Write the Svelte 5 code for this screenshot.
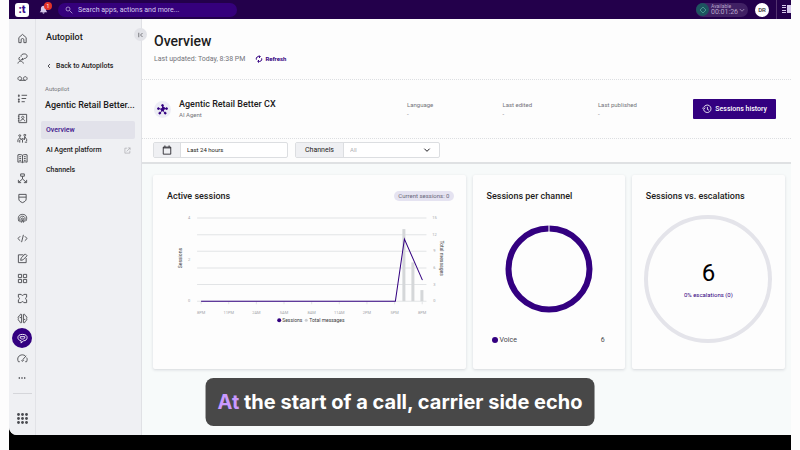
<script lang="ts">
    type NavItem = { name: string; path: string };

    // Rail icons, drawn as strokes on a 24 unit grid
    const rail: NavItem[] = [
        { name: "Home", path: "M4 10l8-7 8 7v11h-5v-6a3 3 0 0 0-6 0v6H4z" },
        { name: "Conversations", path: "M7 9a3.500 3.500 0 1 0 4 4M2 23c1-4 3-5 6-5s5 2 6 5M9 8c-1-5 4-6 7-6 4 0 6 2 6 5s-3 5-6 5l-4 3v-4" },
        { name: "Voicemail", path: "M6 8a4 4 0 1 0 .1 0M18 8a4 4 0 1 0 .1 0M6 16h12" },
        { name: "Tasks", path: "M4 3v6M2 6h4M4 12v9M2 14h4M2 19h4M10 5h12M10 12h10M10 19h7" },
        { name: "Contacts", path: "M4 3h17v18H4zM2 7h3M2 12h3M2 17h3M12.500 7a2.500 2.500 0 1 0 .1 0M8 18c1-6 8-6 9 0" },
        { name: "Teams", path: "M6 4a2 2 0 1 0 .1 0M17 3a2 2 0 1 0 .1 0M2 20v-5l4-5 3 5 3-4 4 4 1-7 4 6v4M6 15v6M12 14v7M17 20h5" },
        { name: "Knowledge", path: "M12 5v16M12 5C9 3 5 3 2 4v16c4-1 7-1 10 1 3-2 6-2 10-1V4c-3-1-7-1-10 1M5 8h4M5 12h4M15 8h4M15 12h4M15 16h4M5 16h4" },
        { name: "Routing", path: "M8 2h8v5H8zM12 7v6L4 20M12 13l8 7M3 15v6h6M21 15v6h-6" },
        { name: "Guardian", path: "M4 3h16v10c0 4-3 6-8 8-5-2-8-4-8-8zM4 9h16" },
        { name: "Identity", path: "M4 18c-3-9 0-15 8-15s11 6 8 14M7 20c-3-9 0-13 5-13s7 4 5 12M10 21c-2-7-1-10 2-10s3 4 2 10M12 14v5" },
        { name: "Developer", path: "M7 7l-5 5 5 5M17 7l5 5-5 5M14 4l-4 16" },
        { name: "Designer", path: "M14 4H3v17h17V11M8 16l1-5 9-9 4 4-9 9z" },
        { name: "Apps", path: "M3 3h7v7H3zM14 3h7v7h-7zM3 14h7v7H3zM14 14h7v7h-7z" },
        { name: "Spaces", path: "M3 9V3h6M15 3h6v6M21 15v6h-6M9 21H3v-6M3 9c3 1 3 5 0 6M21 9c-3 1-3 5 0 6M9 3c1 3 5 3 6 0M9 21c1-3 5-3 6 0" },
        { name: "Intelligence", path: "M10 3C6 2 6 5 6 6c-4 1-4 4-3 6-1 3 0 5 3 6 0 3 2 4 4 3zM14 3c4-1 4 2 4 3 4 1 4 4 3 6 1 3 0 5-3 6 0 3-2 4-4 3zM6 10h3M15 14h3" },
        { name: "Autopilot", path: "M12 3c7 0 10 3 10 7s-3 7-8 7l-5 5v-5c-5-1-7-4-7-7 0-4 3-7 10-7zM7 8h10v3c-2 3-8 3-10 0z" },
        { name: "Dashboard", path: "M6 19H3C-1 11 4 4 12 4c2 0 4 1 6 2M21 10c2 3 1 6 0 9h-3M20 6l-7 8M13 14a2 2 0 1 1-3 2" },
        { name: "More", path: "M2 12h4M10 12h4M18 12h4" },
    ];

    const hours = ["8PM", "11PM", "2AM", "5AM", "8AM", "11AM", "2PM", "5PM", "8PM"];
    const messageTicks = [15, 12, 9, 6, 3, 0];
    const sessionTicks = [4, 2, 0];
    const bars = [
        { x: 251, messages: 13 },
        { x: 260, messages: 7 },
        { x: 269, messages: 2 },
    ];
    const details = ["Language", "Last edited", "Last published"];

    const top = 42;
    const bottom = 125;

    function messageY(value: number) {
        return bottom - (value / 15) * (bottom - top);
    }

    function sessionY(value: number) {
        return bottom - (value / 4) * (bottom - top);
    }
</script>

<div class="frame">
    <div class="app">
        <header class="topbar">
            <a class="logo" href="#home" aria-label="Home">:t</a>
            <button class="bell" aria-label="Notifications">
                <svg viewBox="0 0 24 24"><path d="M12 2c-5 0-7 4-7 8v5l-3 4h20l-3-4v-5c0-4-2-8-7-8zM9 20a3 3 0 0 0 6 0z" /></svg>
                <span class="badge">1</span>
            </button>
            <label class="search">
                <svg class="stroke" viewBox="0 0 24 24"><circle cx="9" cy="9" r="6" /><path d="M14 14l8 8" /></svg>
                <input type="search" placeholder="Search apps, actions and more..." aria-label="Search" />
            </label>
            <button class="status">
                <span class="status-icon">
                    <svg class="stroke" viewBox="0 0 24 24"><path d="M12 3l9 9-9 9-9-9z" /></svg>
                </span>
                <span class="status-text"><small>Available</small>00:01:26</span>
                <svg class="stroke chevron" viewBox="0 0 24 24"><path d="M3 8l9 9 9-9" /></svg>
            </button>
            <button class="avatar">DR</button>
            <button class="panel" aria-label="Side panel">
                <svg viewBox="0 0 9 9"><path d="M0 0h4v1H0zM0 2h4v1H0zM0 5h4v1H0zM0 7h4v1H0zM5 0h4v8H5z" /></svg>
            </button>
        </header>

        <div class="body">
            <nav class="rail" aria-label="Apps">
                {#each rail as item}
                    <a href="#{item.name}" class:active={item.name === "Autopilot"} class:more={item.name === "More"} aria-label={item.name}>
                        <svg class="stroke" viewBox="0 0 24 24"><path d={item.path} /></svg>
                    </a>
                {/each}
                <hr />
                <button class="launcher" aria-label="All apps">
                    <svg viewBox="0 0 11 11">
                        {#each [0, 4, 8] as y}
                            {#each [0, 4, 8] as x}
                                <circle cx={x + 1.5} cy={y + 1.5} r="1.4" />
                            {/each}
                        {/each}
                    </svg>
                </button>
            </nav>

            <aside class="sidebar">
                <button class="collapse" aria-label="Collapse">
                    <svg class="stroke" viewBox="0 0 24 24"><path d="M3 3v18M18 4l-8 8 8 8" /></svg>
                </button>
                <h2>Autopilot</h2>
                <a class="back" href="#autopilots">
                    <svg class="stroke" viewBox="0 0 24 24"><path d="M16 4l-8 8 8 8" /></svg>
                    Back to Autopilots
                </a>
                <p class="kind">Autopilot</p>
                <h3>Agentic Retail Better...</h3>
                <ul>
                    <li><a class="current" href="#overview">Overview</a></li>
                    <li>
                        <a href="#platform">
                            AI Agent platform
                            <svg class="stroke external" viewBox="0 0 24 24"><path d="M11 4H3v17h17v-8M14 3h7v7M21 3L9 15" /></svg>
                        </a>
                    </li>
                    <li><a href="#channels">Channels</a></li>
                </ul>
            </aside>

            <main>
                <section class="heading">
                    <h1>Overview</h1>
                    <div class="updated">
                        <span>Last updated: Today, 8:38 PM</span>
                        <button class="refresh">
                            <svg class="stroke" viewBox="0 0 24 24"><path d="M4 14C2 7 8 3 15 5M20 10c2 7-4 11-11 9M12 1l4 4-4 4M12 23l-4-4 4-4" /></svg>
                            Refresh
                        </button>
                    </div>
                </section>

                <section class="agent">
                    <div class="identity">
                        <span class="agent-icon">
                            <svg viewBox="0 0 24 24">
                                <path d="M12 4v8l8-2M12 12l5 8M12 12l-5 8M12 12L4 10" />
                                <circle cx="12" cy="12" r="3" />
                                <circle cx="12" cy="3" r="2" />
                                <circle cx="21" cy="10" r="2" />
                                <circle cx="18" cy="20" r="2" />
                                <circle cx="6" cy="20" r="2" />
                                <circle cx="3" cy="10" r="2" />
                            </svg>
                        </span>
                        <div>
                            <h3>Agentic Retail Better CX</h3>
                            <p>AI Agent</p>
                        </div>
                    </div>
                    <dl>
                        {#each details as detail}
                            <div>
                                <dt>{detail}</dt>
                                <dd>-</dd>
                            </div>
                        {/each}
                    </dl>
                    <button class="history">
                        <svg class="stroke" viewBox="0 0 24 24"><path d="M4 14a9 9 0 1 0 0-5M1 9l3 4 4-4M13 7v6l4 2" /></svg>
                        Sessions history
                    </button>
                </section>

                <section class="filters">
                    <label class="field">
                        <span class="addon calendar">
                            <svg class="stroke" viewBox="0 0 24 24"><path d="M3 5h18v17H3zM3 7h18M7 1v4M17 1v4" /></svg>
                        </span>
                        <input type="text" value="Last 24 hours" aria-label="Date range" />
                    </label>
                    <label class="field">
                        <span class="addon">Channels</span>
                        <select>
                            <option>All</option>
                        </select>
                        <svg class="stroke arrow" viewBox="0 0 24 24"><path d="M4 8l8 8 8-8" /></svg>
                    </label>
                </section>

                <section class="cards">
                    <article class="card">
                        <div class="card-title">
                            <h3>Active sessions</h3>
                            <span class="pill">Current sessions: 0</span>
                        </div>
                        <svg class="chart" viewBox="0 20 312 140" role="img" aria-label="Active sessions">
                            {#each messageTicks as tick}
                                <line class="grid" x1="44" x2="273" y1={messageY(tick)} y2={messageY(tick)} />
                                <text class="tick" x="281" y={messageY(tick) + 1} text-anchor="middle">{tick}</text>
                            {/each}
                            {#each sessionTicks as tick}
                                <text class="tick" x="36" y={sessionY(tick) + 1} text-anchor="middle">{tick}</text>
                            {/each}
                            {#each hours as hour, i}
                                <line class="grid" x1={48 + i * 27.6} x2={48 + i * 27.6} y1="125" y2="128" />
                                <text class="tick" x={48 + i * 27.6} y="138" text-anchor="middle">{hour}</text>
                            {/each}
                            {#each bars as bar}
                                <rect class="bar" x={bar.x - 2} y={messageY(bar.messages)} width="3" height={bottom - messageY(bar.messages)} />
                            {/each}
                            <polyline class="line" points="48,125 242,125 251,63 269,104" />
                            <text class="axis" transform="translate(29 82) rotate(-90)" text-anchor="middle">Sessions</text>
                            <text class="axis" transform="translate(287 82) rotate(90)" text-anchor="middle">Total messages</text>
                            <circle cx="126" cy="144" r="2" fill="#330080" />
                            <text class="axis" x="129" y="146">Sessions</text>
                            <circle cx="153" cy="144" r="1.5" fill="#ccced2" />
                            <text class="axis" x="156" y="146">Total messages</text>
                        </svg>
                    </article>

                    <article class="card">
                        <div class="card-title">
                            <h3>Sessions per channel</h3>
                        </div>
                        <svg class="donut" viewBox="0 0 88 88" role="img" aria-label="Sessions per channel">
                            <circle cx="44" cy="44" r="40.5" />
                            <path d="M44 0v8" />
                        </svg>
                        <div class="channel">
                            <span class="dot"></span>
                            <span>Voice</span>
                            <span class="count">6</span>
                        </div>
                    </article>

                    <article class="card">
                        <div class="card-title">
                            <h3>Sessions vs. escalations</h3>
                        </div>
                        <div class="gauge">
                            <strong>6</strong>
                            <span>0% escalations (0)</span>
                        </div>
                    </article>
                </section>
            </main>
        </div>
    </div>

    <p class="caption"><span>At</span> the start of a call, carrier side echo</p>
</div>

<style>
    :global(body) {
        margin: 0;
        background: #fdfdfd;
    }

    .frame {
        --ink: #1c1b20;
        --muted: #73747a;
        --purple: #330080;
        --line: #dcdee1;
        position: relative;
        display: flex;
        box-sizing: border-box;
        min-height: 100vh;
        margin: 0 9px;
        padding-bottom: 15px;
        background: #000;
        color: var(--ink);
        font-family: Roboto, "Liberation Sans", sans-serif;
        font-size: 7px;
        line-height: 10px;
    }

    .frame :is(h1, h2, h3, p, ul, dl, dd) {
        margin: 0;
        padding: 0;
    }

    .frame :is(h1, h2, h3) {
        font-weight: 500;
    }

    button,
    input,
    select {
        padding: 0;
        border: 0;
        background: none;
        color: inherit;
        font: inherit;
    }

    a {
        color: inherit;
        text-decoration: none;
    }

    svg {
        display: block;
        flex: none;
        fill: currentColor;
    }

    .stroke {
        fill: none;
        stroke: currentColor;
        stroke-width: 2;
    }

    .app {
        display: flex;
        flex: 1;
        flex-direction: column;
        overflow: hidden;
        border-radius: 0 0 0 8px;
        background: #fdfdfd;
    }

    .topbar {
        display: flex;
        align-items: center;
        height: 19px;
        padding-left: 6px;
        background: #23004b;
        color: #d5c8ea;
    }

    .logo {
        width: 14px;
        height: 14px;
        border-radius: 3px;
        background: #fff;
        color: #3a0a90;
        font-size: 11px;
        font-weight: 900;
        line-height: 13px;
        text-align: center;
    }

    .bell {
        position: relative;
        margin-left: 10px;
    }

    .bell svg {
        width: 9px;
        height: 9px;
    }

    .badge {
        position: absolute;
        top: -3px;
        left: 5px;
        width: 8px;
        height: 8px;
        border-radius: 50%;
        background: #e23329;
        color: #fff;
        font-size: 5px;
        line-height: 8px;
    }

    .search {
        display: flex;
        align-items: center;
        gap: 5px;
        width: 172px;
        height: 14px;
        margin-left: 10px;
        padding-left: 7px;
        border-radius: 7px;
        background: #35007c;
    }

    .search svg {
        width: 8px;
        height: 8px;
    }

    .search input {
        flex: 1;
        outline: 0;
    }

    .search input::placeholder {
        color: #d8cbee;
        opacity: 1;
    }

    .status {
        display: flex;
        align-items: center;
        gap: 2px;
        height: 14px;
        margin-left: auto;
        padding-right: 3px;
        border-radius: 7px;
        background: #402064;
        color: #b7a5cb;
        font-size: 7px;
        line-height: 7px;
        text-align: left;
    }

    .status-icon {
        display: grid;
        place-items: center;
        width: 13px;
        height: 13px;
        border-radius: 50%;
        background: #1d5560;
        color: #5fb5a6;
    }

    .status-icon svg {
        width: 8px;
        height: 8px;
    }

    .status-text {
        width: 26px;
    }

    .status-text small {
        display: block;
        font-size: 5px;
        line-height: 5px;
    }

    .chevron {
        width: 6px;
        height: 6px;
        stroke-width: 3;
    }

    .avatar {
        width: 14px;
        height: 14px;
        margin: 0 7px;
        border-radius: 50%;
        background: #fff;
        color: #333;
        font-size: 6px;
        font-weight: 500;
    }

    .panel {
        align-self: stretch;
        padding-left: 5px;
        border-left: 1px solid #52336f;
    }

    .panel svg {
        width: 9px;
        height: 9px;
    }

    .body {
        display: flex;
        flex: 1;
    }

    .rail {
        display: flex;
        flex-direction: column;
        align-items: center;
        width: 26px;
        padding-top: 9px;
        border-right: 1px solid #e2e3e7;
        background: #eff0f3;
        color: #4a4b50;
    }

    .rail a {
        display: grid;
        place-items: center;
        width: 20px;
        height: 20px;
        border-radius: 50%;
    }

    .rail svg {
        width: 11px;
        height: 11px;
    }

    .rail .active {
        background: var(--purple);
        color: #fff;
    }

    .rail .more svg {
        width: 8px;
        height: 8px;
        stroke-width: 4;
    }

    hr {
        width: 19px;
        margin: 5px 0 0;
        border: 0;
        border-top: 1px solid #d5d6da;
    }

    .launcher {
        margin-top: 19px;
    }

    .sidebar {
        position: relative;
        width: 106px;
        box-sizing: border-box;
        padding: 12px 6px 0 5px;
        border-right: 1px solid #e0e1e5;
        background: #eff0f3;
        font-weight: 500;
    }

    .sidebar h2 {
        padding-left: 5px;
        font-size: 9px;
        line-height: 12px;
    }

    .collapse {
        position: absolute;
        top: 9px;
        right: -6px;
        display: grid;
        place-items: center;
        width: 13px;
        height: 13px;
        border-radius: 50%;
        background: #e2e3e8;
        color: #55565c;
    }

    .collapse svg {
        width: 6px;
        height: 6px;
        stroke-width: 3;
    }

    .back {
        display: flex;
        align-items: center;
        gap: 4px;
        margin-top: 18px;
        padding-left: 5px;
    }

    .back svg {
        width: 6px;
        height: 6px;
        stroke-width: 3;
    }

    .sidebar .kind {
        margin-top: 13px;
        padding-left: 4px;
        color: var(--muted);
        font-size: 6px;
        font-weight: 400;
    }

    .sidebar h3 {
        overflow: hidden;
        margin-top: 5px;
        padding-left: 4px;
        font-size: 9px;
        line-height: 12px;
        white-space: nowrap;
    }

    .sidebar ul {
        margin-top: 10px;
        list-style: none;
    }

    li a {
        display: flex;
        align-items: center;
        justify-content: space-between;
        height: 18px;
        margin-bottom: 2px;
        padding: 0 4px 0 5px;
        border-radius: 2px;
    }

    .current {
        background: #e2e2ea;
        color: #40148c;
    }

    .external {
        width: 7px;
        height: 7px;
        color: #a0a1a6;
    }

    main {
        display: flex;
        flex: 1;
        flex-direction: column;
        background: #f7fafa;
    }

    .heading,
    .agent,
    .filters {
        padding-left: 12px;
        background: #fdfdfd;
    }

    .heading {
        padding-top: 13px;
        padding-bottom: 15px;
        border-bottom: 1px dotted var(--line);
    }

    .heading h1 {
        font-size: 14px;
        line-height: 18px;
    }

    .updated {
        display: flex;
        align-items: center;
        gap: 10px;
        margin-top: 4px;
        color: var(--muted);
    }

    .refresh {
        display: flex;
        align-items: center;
        gap: 2px;
        color: var(--purple);
        font-size: 6px;
        font-weight: 700;
    }

    .refresh svg {
        width: 8px;
        height: 8px;
        stroke-width: 3;
    }

    .agent {
        display: flex;
        align-items: center;
        height: 58px;
        padding-right: 15px;
        border-bottom: 1px dotted var(--line);
    }

    .identity {
        display: flex;
        align-items: center;
        gap: 8px;
        width: 253px;
    }

    .agent h3 {
        font-size: 9px;
        line-height: 11px;
    }

    .agent p {
        color: var(--muted);
        font-size: 6px;
        line-height: 9px;
    }

    .agent-icon {
        display: grid;
        place-items: center;
        width: 17px;
        height: 17px;
        border-radius: 50%;
        background: #ededf5;
        color: var(--purple);
    }

    .agent-icon svg {
        width: 11px;
        height: 11px;
        stroke: currentColor;
        stroke-width: 2;
    }

    dl {
        display: grid;
        flex: 1;
        grid-template-columns: repeat(3, 1fr);
        color: var(--muted);
        font-size: 6px;
        line-height: 9px;
    }

    .history {
        display: flex;
        align-items: center;
        gap: 3px;
        height: 20px;
        padding: 0 9px;
        border-radius: 1px;
        background: var(--purple);
        color: #fff;
        font-weight: 500;
    }

    .history svg {
        width: 10px;
        height: 10px;
    }

    .filters {
        display: flex;
        gap: 7px;
        padding: 3px 0 4px 11px;
        border-bottom: 2px solid #dfe1e3;
    }

    .field {
        position: relative;
        display: flex;
        box-sizing: border-box;
        width: 135px;
        height: 16px;
        border: 1px solid var(--line);
        border-radius: 2px;
        background: #fff;
        font-size: 6px;
    }

    .field + .field {
        width: 145px;
    }

    .addon {
        display: grid;
        place-items: center;
        width: 48px;
        box-sizing: border-box;
        border-right: 1px solid var(--line);
        background: #eff0f3;
        font-size: 7px;
    }

    .calendar {
        width: 27px;
    }

    .calendar svg {
        width: 10px;
        height: 10px;
    }

    .field input,
    .field select {
        flex: 1;
        min-width: 0;
        padding-left: 6px;
        appearance: none;
    }

    .field select {
        color: #aeb0b4;
    }

    .arrow {
        position: absolute;
        top: 3px;
        right: 8px;
        width: 8px;
        height: 8px;
        stroke-width: 3;
        pointer-events: none;
    }

    .cards {
        display: grid;
        flex: 1;
        grid-template-columns: 312fr 152fr 153fr;
        align-content: start;
        gap: 7px;
        padding: 11px 6px 56px 11px;
    }

    .card {
        display: flex;
        flex-direction: column;
        align-items: center;
        min-height: 194px;
        border-radius: 2px;
        background: #fdfdfd;
        box-shadow: 0 1px 3px #d5d8dc;
    }

    .card-title {
        display: flex;
        align-items: center;
        justify-content: space-between;
        align-self: stretch;
        padding: 15px 12px 0 14px;
    }

    .card h3 {
        font-size: 9px;
        line-height: 12px;
    }

    .pill {
        padding: 0 4px;
        border-radius: 5px;
        background: #e5e3f1;
        color: #6a6879;
        font-size: 6px;
    }

    .chart {
        width: 100%;
        margin-top: -6px;
    }

    .grid {
        stroke: #e2e4e6;
        stroke-width: 1;
    }

    .tick {
        fill: #a4a6aa;
        font-size: 4px;
    }

    .axis {
        fill: #3a3b40;
        font-size: 5px;
    }

    .bar {
        fill: #d5d7d9;
    }

    .line {
        fill: none;
        stroke: var(--purple);
        stroke-width: 1;
    }

    .donut {
        width: 88px;
        height: 88px;
        margin-top: 23px;
    }

    .donut circle {
        fill: none;
        stroke: var(--purple);
        stroke-width: 6;
    }

    .donut path {
        stroke: #fff;
    }

    .channel {
        display: flex;
        align-items: center;
        align-self: stretch;
        gap: 2px;
        margin-top: 22px;
        padding: 0 20px 0 19px;
        color: #46474c;
    }

    .dot {
        width: 6px;
        height: 6px;
        border-radius: 50%;
        background: var(--purple);
    }

    .count {
        margin-left: auto;
    }

    .gauge {
        display: flex;
        flex-direction: column;
        align-items: center;
        justify-content: center;
        box-sizing: border-box;
        width: 128px;
        height: 128px;
        margin-top: 13px;
        border: 4px solid #e4e4ea;
        border-radius: 50%;
        color: var(--purple);
        font-size: 6px;
    }

    .gauge strong {
        margin-bottom: 3px;
        color: #000;
        font-size: 24px;
        font-weight: 400;
        line-height: 28px;
    }

    .frame .caption {
        position: absolute;
        bottom: 24px;
        left: 50%;
        box-sizing: border-box;
        padding: 10px 12px;
        border-radius: 8px;
        background: #484848;
        color: #fff;
        font-family: Inter, "Open Sans", sans-serif;
        font-size: 20px;
        font-weight: 700;
        line-height: 28px;
        white-space: nowrap;
        transform: translateX(-50%);
    }

    .caption span {
        color: #c999ff;
    }
</style>
